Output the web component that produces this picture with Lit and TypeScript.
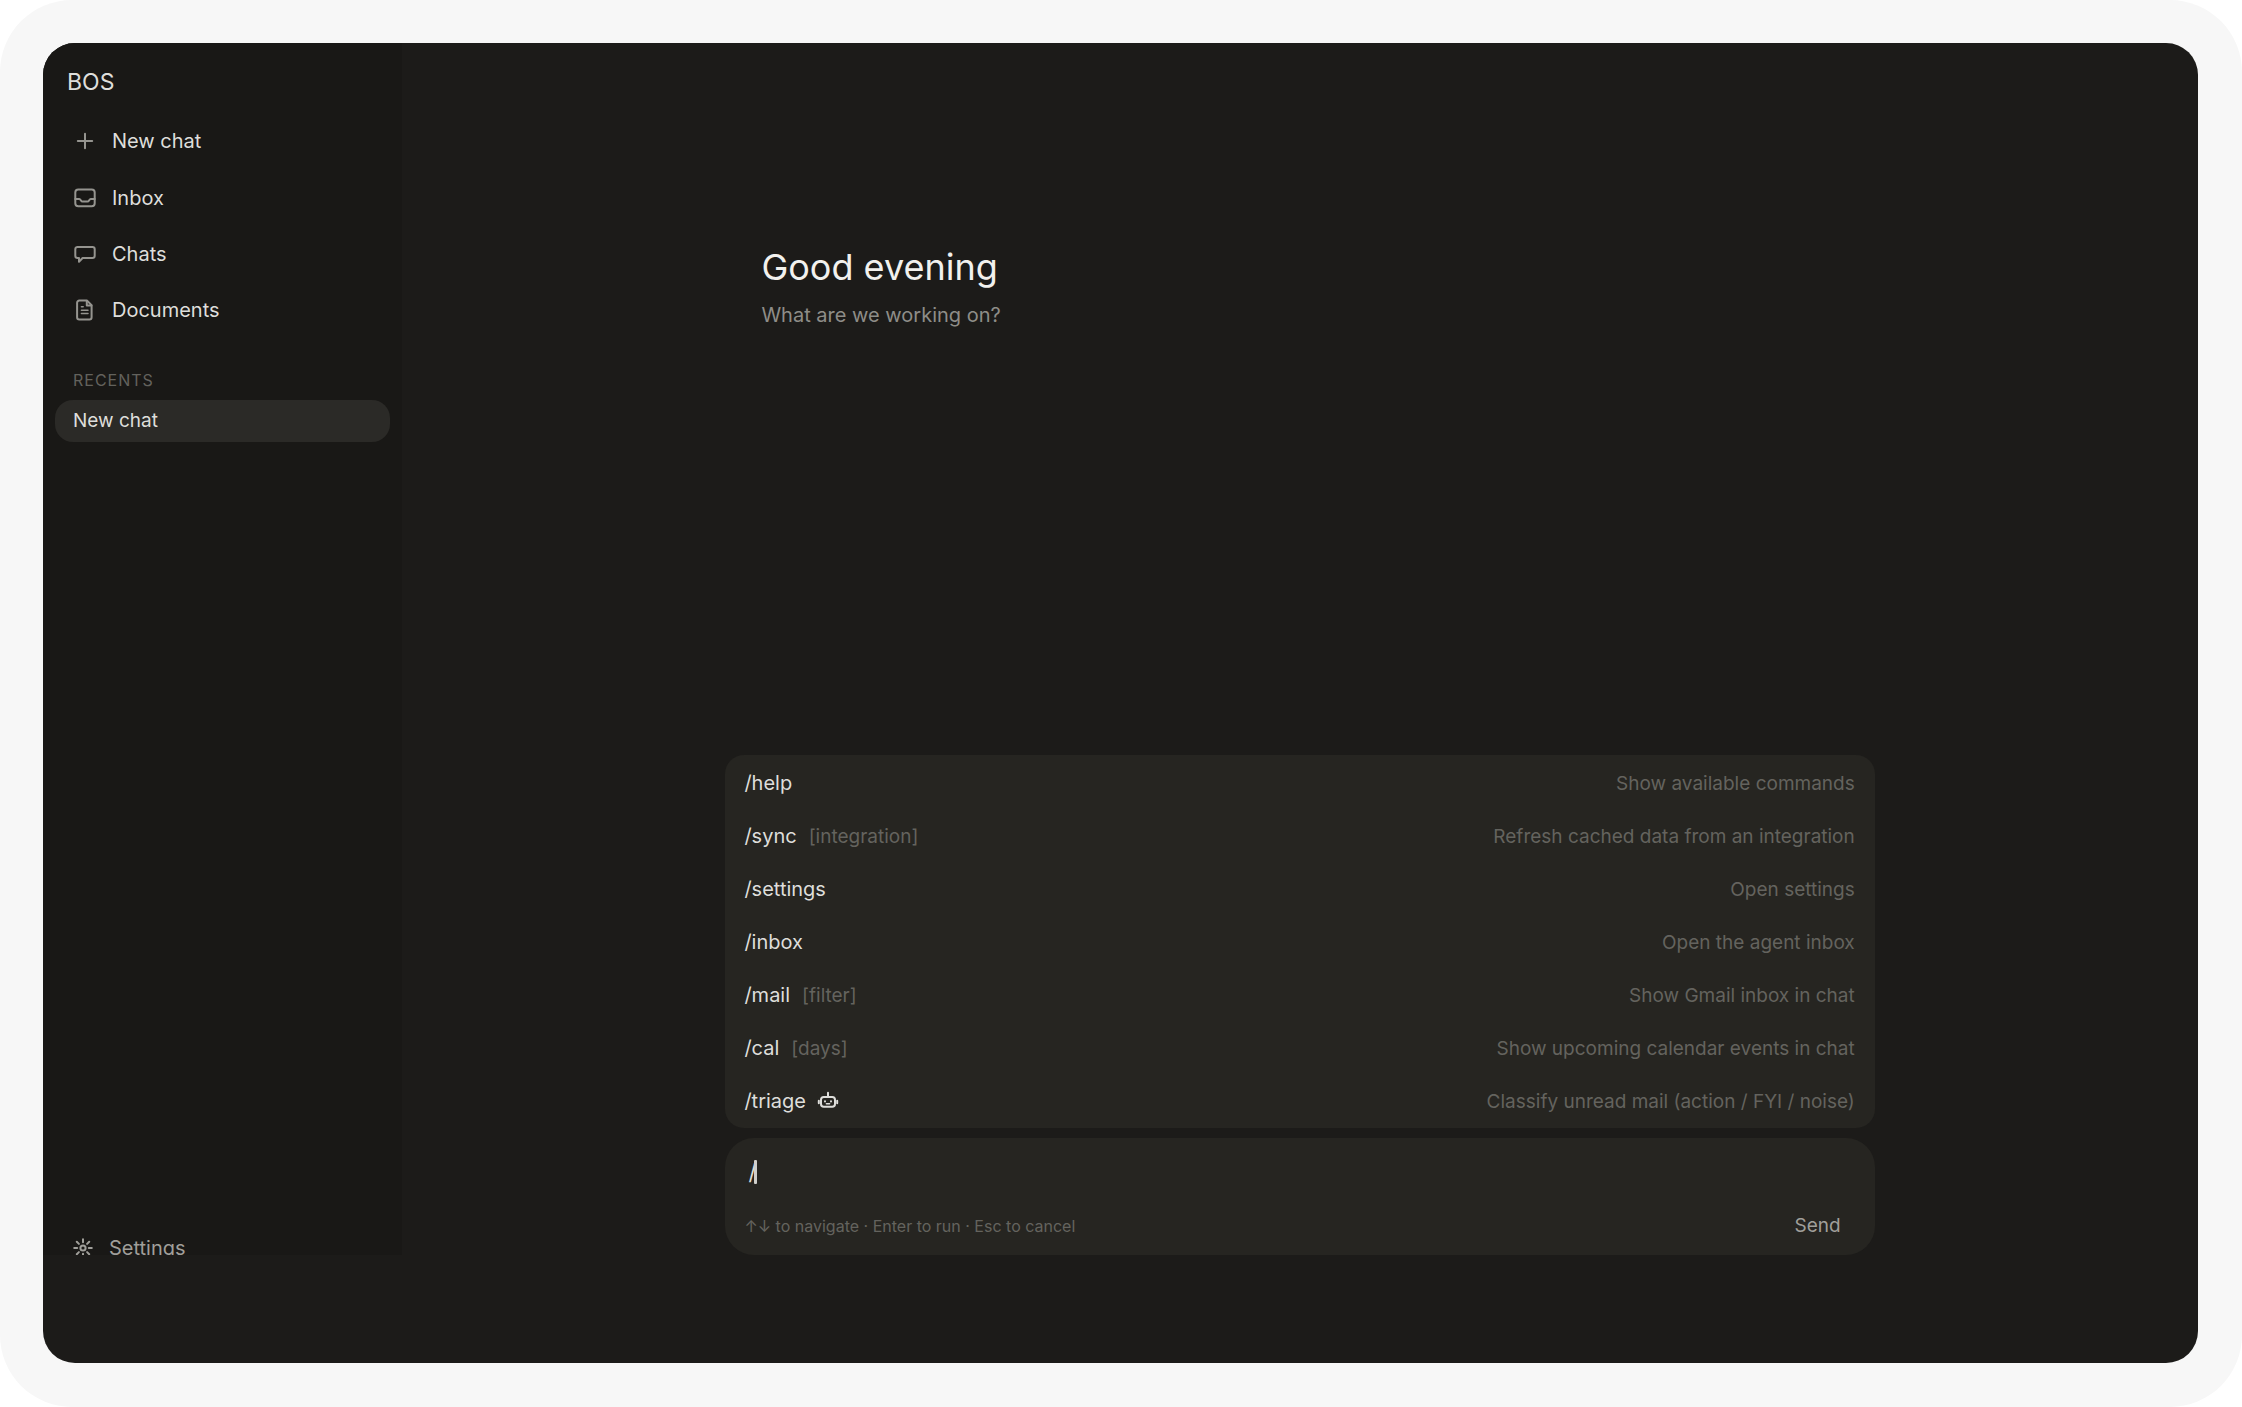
import { LitElement, html, css, svg, nothing } from "lit";
import { customElement, property, state } from "lit/decorators.js";

type IconName = "plus" | "inbox" | "chat" | "document" | "gear" | "robot";

const ICONS = {
  plus: svg`<path d="M12 4.800v14.400M4.800 12h14.400" />`,
  inbox: svg`
    <rect x="2.300" y="3.600" width="19.400" height="16.600" rx="3" />
    <path d="M2.300 13h4c1.500 0 1.500 2.600 3.200 2.600h5c1.700 0 1.700-2.600 3.200-2.600h4" />`,
  chat: svg`<path d="M4.600 4.900h14.800a2.300 2.300 0 0 1 2.300 2.300v6.500a2.300 2.300 0 0 1-2.300 2.300H9.600L6 19.800V16H4.600a2.300 2.300 0 0 1-2.300-2.300V7.200a2.300 2.300 0 0 1 2.300-2.300z" />`,
  document: svg`
    <path d="M6.300 2.600h7.800l4.500 4.600v12a2.200 2.200 0 0 1-2.200 2.200H6.300a2.200 2.200 0 0 1-2.200-2.200V4.800a2.200 2.200 0 0 1 2.200-2.200z" />
    <path d="M13.800 2.900v4.700h4.600" />
    <path class="thin" d="M8.400 8.800h1.800M8.400 12.200h6.600M8.400 15.600h6.600" />`,
  gear: svg`
    <circle cx="12" cy="12" r="2.600" />
    <path d="M12 3.200v3M12 17.800v3M3.200 12h3M17.800 12h3M5.800 5.800l2.100 2.100M16.100 16.100l2.100 2.100M18.200 5.800l-2.100 2.100M7.900 16.100l-2.100 2.100" />`,
  robot: svg`
    <path d="M12 2.800v4M2.800 10.800v2.400M21.200 10.800v2.400" />
    <rect x="5" y="7" width="14" height="9.800" rx="2.800" />
    <path d="M9 11.300v.2M15 11.300v.2" />
    <path class="thin" d="M10.400 13.800h3.200" />`,
};

@customElement("line-icon")
export class LineIcon extends LitElement {
  @property() name: IconName = "plus";

  static styles = css`
    :host {
      display: inline-flex;
      flex: none;
      width: 24px;
      height: 24px;
    }
    .glyph {
      width: 100%;
      height: 100%;
      fill: none;
      stroke: currentColor;
      stroke-width: 2;
      stroke-linecap: round;
      stroke-linejoin: round;
    }
    .thin {
      stroke-width: 1.5;
    }
  `;

  render() {
    return html`<svg class="glyph" viewBox="0 0 24 24" aria-hidden="true">
      ${ICONS[this.name]}
    </svg>`;
  }
}

@customElement("side-bar")
export class SideBar extends LitElement {
  static styles = css`
    :host {
      display: flex;
      flex-direction: column;
      box-sizing: border-box;
      padding: 21px 12px 0;
      background: #191816;
      overflow: hidden;
    }
    .brand {
      padding: 0 12px;
      font-size: 23px;
      line-height: 36px;
      color: #dededb;
    }
    .nav {
      display: flex;
      flex-direction: column;
      gap: 16px;
      margin-top: 21px;
    }
    .link {
      display: flex;
      align-items: center;
      gap: 15px;
      padding: 0 18px;
      font-size: 20px;
      line-height: 40px;
      color: #dededb;
      text-decoration: none;
    }
    .new {
      margin-bottom: 1px;
    }
    .icon {
      color: #95948f;
    }
    .heading {
      margin: 38px 0 8px;
      padding: 0 18px;
      font-size: 16px;
      font-weight: 400;
      line-height: 24px;
      letter-spacing: 1px;
      color: #63625d;
    }
    .recent {
      padding: 0 18px;
      border-radius: 18px;
      background: #2b2a27;
      font-size: 19px;
      line-height: 42px;
      color: #dededb;
      text-decoration: none;
    }
    .footer {
      margin-top: auto;
      margin-bottom: -13px;
    }
    .settings {
      gap: 14px;
      padding: 0 16px;
      color: #a09f9a;
    }
  `;

  render() {
    return html`
      <div class="brand">BOS</div>
      <nav class="nav" aria-label="Main">
        <a class="link new" href="#new"><line-icon class="icon" name="plus"></line-icon>New chat</a>
        <a class="link" href="#inbox"><line-icon class="icon" name="inbox"></line-icon>Inbox</a>
        <a class="link" href="#chats"><line-icon class="icon" name="chat"></line-icon>Chats</a>
        <a class="link" href="#documents"><line-icon class="icon" name="document"></line-icon>Documents</a>
      </nav>
      <h2 class="heading">RECENTS</h2>
      <a class="recent" href="#chat" aria-current="page">New chat</a>
      <div class="footer">
        <a class="link settings" href="#settings"><line-icon name="gear"></line-icon>Settings</a>
      </div>
    `;
  }
}

interface Command {
  name: string;
  arg?: string;
  agent?: boolean;
  about: string;
}

const COMMANDS: Command[] = [
  { name: "/help", about: "Show available commands" },
  { name: "/sync", arg: "[integration]", about: "Refresh cached data from an integration" },
  { name: "/settings", about: "Open settings" },
  { name: "/inbox", about: "Open the agent inbox" },
  { name: "/mail", arg: "[filter]", about: "Show Gmail inbox in chat" },
  { name: "/cal", arg: "[days]", about: "Show upcoming calendar events in chat" },
  { name: "/triage", agent: true, about: "Classify unread mail (action / FYI / noise)" },
];

@customElement("command-menu")
export class CommandMenu extends LitElement {
  static styles = css`
    :host {
      display: flex;
      flex-direction: column;
      padding: 2px 0 0;
      border-radius: 19px;
      background: #262521;
    }
    .row {
      display: flex;
      align-items: center;
      gap: 12px;
      padding: 0 20px 0 19px;
      border: 0;
      background: none;
      font: inherit;
      font-size: 19px;
      line-height: 53px;
      text-align: left;
      color: #64635e;
    }
    .name {
      font-size: 20px;
      color: #dededb;
    }
    .agent {
      margin: 0 -2px;
      color: #dededb;
    }
    .about {
      margin-left: auto;
    }
  `;

  render() {
    return COMMANDS.map(
      (c) => html`<button class="row" type="button">
        <span class="name">${c.name}</span>
        ${c.arg ? html`<span>${c.arg}</span>` : nothing}
        ${c.agent ? html`<line-icon class="agent" name="robot"></line-icon>` : nothing}
        <span class="about">${c.about}</span>
      </button>`
    );
  }
}

@customElement("message-composer")
export class MessageComposer extends LitElement {
  @state() private draft = "/";

  static styles = css`
    :host {
      display: block;
      border-radius: 29px;
      background: #262521;
    }
    .form {
      display: flex;
      flex-direction: column;
      gap: 20px;
      padding: 18px 20px 11px 19px;
    }
    .field {
      position: relative;
      display: flex;
    }
    .input {
      flex: 1;
      height: 32px;
      padding: 0 4px;
      border: 0;
      outline: 0;
      background: none;
      resize: none;
      overflow: hidden;
      font: inherit;
      font-size: 22px;
      line-height: 32px;
      color: #dededb;
      caret-color: transparent;
    }
    .caret {
      position: absolute;
      left: 10px;
      top: 4px;
      width: 3px;
      height: 24px;
      border-radius: 1px;
      background: #d0cfcc;
    }
    .bar {
      display: flex;
      align-items: center;
      justify-content: space-between;
    }
    .hint {
      font-size: 16px;
      line-height: 24px;
      color: #64635e;
    }
    .send {
      padding: 0 14px;
      border: 0;
      background: none;
      font: inherit;
      font-size: 19px;
      line-height: 36px;
      color: #a09f9a;
    }
  `;

  private onInput(e: Event) {
    this.draft = (e.target as HTMLTextAreaElement).value;
  }

  render() {
    return html`<form class="form" @submit=${(e: Event) => e.preventDefault()}>
      <div class="field">
        <textarea
          class="input"
          rows="1"
          aria-label="Message"
          .value=${this.draft}
          @input=${this.onInput}
        ></textarea>
        ${this.draft === "/" ? html`<span class="caret"></span>` : nothing}
      </div>
      <div class="bar">
        <span class="hint">↑↓ to navigate · Enter to run · Esc to cancel</span>
        <button class="send" type="submit">Send</button>
      </div>
    </form>`;
  }
}

@customElement("app-root")
export class AppRoot extends LitElement {
  static styles = css`
    :host {
      display: block;
      background: #ffffff;
      font-family: Inter, "Liberation Sans", sans-serif;
    }
    .frame {
      display: flex;
      box-sizing: border-box;
      min-height: 100vh;
      padding: 43px 44px 44px 43px;
      border-radius: 72px;
      background: #f7f7f7;
    }
    .window {
      flex: 1;
      display: grid;
      grid-template-columns: 1fr 5fr;
      box-sizing: border-box;
      padding-bottom: 108px;
      border-radius: 32px;
      background: #1c1b19;
      overflow: hidden;
    }
    .main {
      display: flex;
      flex-direction: column;
      box-sizing: border-box;
      width: 64%;
      margin: 0 auto;
      padding-top: 200px;
    }
    .greeting {
      padding: 0 36px;
    }
    .title {
      margin: 0;
      font-size: 36px;
      font-weight: 400;
      line-height: 48px;
      color: #f2f1ee;
    }
    .subtitle {
      margin: 8px 0 0;
      font-size: 20px;
      line-height: 32px;
      color: #8e8d88;
    }
    .dock {
      display: flex;
      flex-direction: column;
      gap: 10px;
      margin-top: auto;
    }
  `;

  render() {
    return html`<div class="frame">
      <div class="window">
        <side-bar></side-bar>
        <main class="main">
          <header class="greeting">
            <h1 class="title">Good evening</h1>
            <p class="subtitle">What are we working on?</p>
          </header>
          <div class="dock">
            <command-menu></command-menu>
            <message-composer></message-composer>
          </div>
        </main>
      </div>
    </div>`;
  }
}
